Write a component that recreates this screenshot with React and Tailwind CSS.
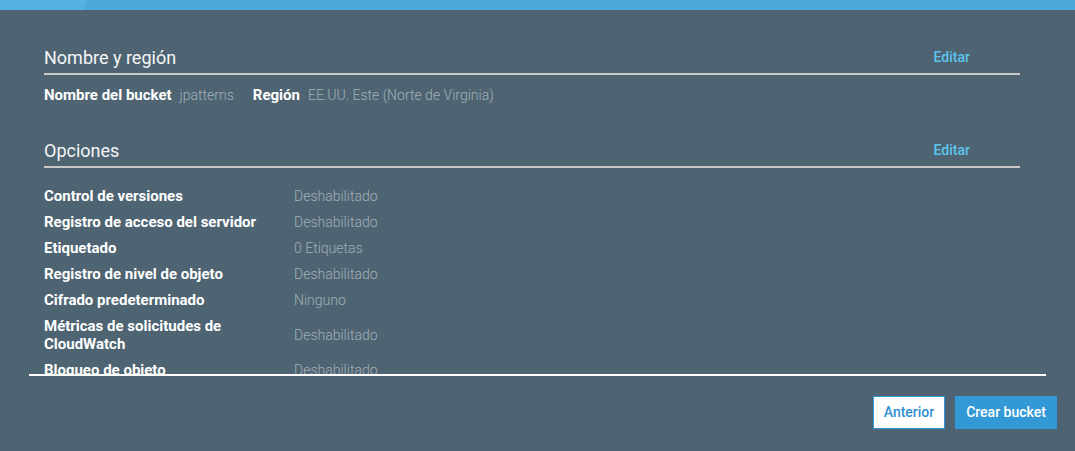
import React from 'react';

const opciones = [
    { label: 'Control de versiones', value: 'Deshabilitado' },
    { label: 'Registro de acceso del servidor', value: 'Deshabilitado' },
    { label: 'Etiquetado', value: '0 Etiquetas' },
    { label: 'Registro de nivel de objeto', value: 'Deshabilitado' },
    { label: 'Cifrado predeterminado', value: 'Ninguno' },
    { label: 'Métricas de solicitudes de CloudWatch', value: 'Deshabilitado' },
    { label: 'Bloqueo de objeto', value: 'Deshabilitado' },
];

function SectionHeader({ title }) {
    return (
        <div className="flex items-end justify-between border-b-2 border-[#c8c9c8] pb-[3px]">
            <h2 className="text-[18px] leading-[24px] text-[#f4f6f7] font-normal">{title}</h2>
            <button className="mr-[50px] mb-[3px] text-[14px] leading-[20px] font-medium text-[#5ec4ef]">Editar</button>
        </div>
    );
}

function App() {
    return (
        <div className="h-[451px] w-full bg-[#4e6472] font-['Roboto',sans-serif] overflow-hidden">
            {/* barra superior */}
            <div className="flex h-[10px] bg-[#4ea8dc]">
                <div className="w-[87px] h-full bg-[#57b2e3] [clip-path:polygon(0_0,100%_0,96%_100%,0_100%)]" />
            </div>

            <div className="ml-[29px] w-[1017px] h-[366px] border-b-2 border-white overflow-hidden">
                <div className="pl-[15px] pr-[26px] pt-[36px]">
                    <section>
                        <SectionHeader title="Nombre y región" />
                        <div className="mt-[10px] flex items-center leading-[20px]">
                            <span className="text-[15px] font-bold text-white">Nombre del bucket</span>
                            <span className="ml-[8px] text-[14px] font-light text-[#a3afb7]">jpatterns</span>
                            <span className="ml-[19px] text-[15px] font-bold text-white">Región</span>
                            <span className="ml-[8px] text-[14px] font-light text-[#a3afb7]">EE.UU. Este (Norte de Virginia)</span>
                        </div>
                    </section>

                    <section className="mt-[34px]">
                        <SectionHeader title="Opciones" />
                        <div className="mt-[15px]">
                            {opciones.map((o) => (
                                <div key={o.label} className="flex items-center py-[4px] leading-[18px]">
                                    <div className="w-[250px] pr-[20px] text-[15px] font-bold text-white">{o.label}</div>
                                    <div className="text-[14px] font-light text-[#a3afb7]">{o.value}</div>
                                </div>
                            ))}
                        </div>
                    </section>
                </div>
            </div>

            <div className="flex justify-end gap-[10px] pr-[18px] pt-[20px]">
                <button className="h-[33px] w-[72px] border border-[#3399d6] bg-white text-[14px] font-medium text-[#2f8fd1]">
                    Anterior
                </button>
                <button className="h-[33px] w-[102px] bg-[#3399d6] text-[14px] font-medium text-white">
                    Crear bucket
                </button>
            </div>
        </div>
    );
}

export default App;
